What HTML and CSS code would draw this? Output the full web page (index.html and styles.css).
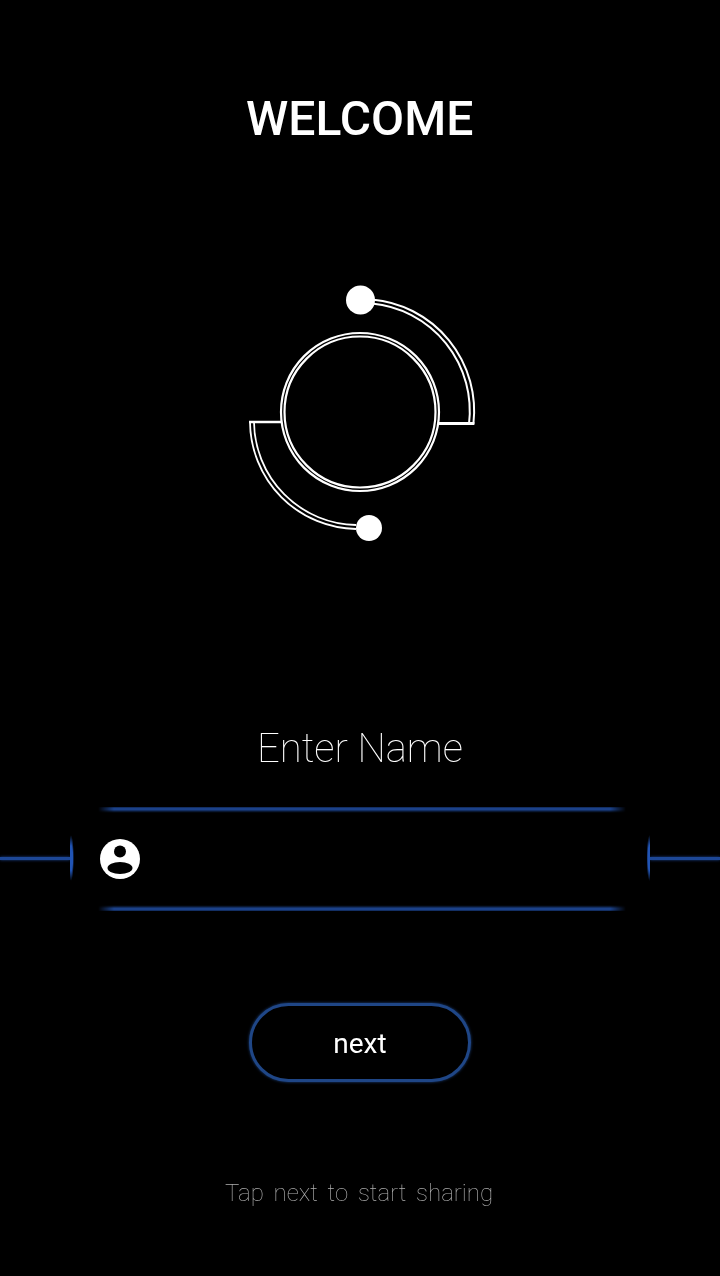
FILE: index.html
```html
<!DOCTYPE html>
<html lang="en">
<head>
<meta charset="utf-8">
<title>Welcome</title>
<link rel="stylesheet" href="styles.css">
</head>
<body>
<main class="screen">
  <h1 class="title">WELCOME</h1>
  <svg class="logo" width="720" height="280" viewBox="0 0 720 280" aria-hidden="true">
    <g transform="translate(0 -270)" fill="none" stroke="#fff">
      <circle cx="360" cy="412" r="79" stroke-width="2.2"/>
      <circle cx="360" cy="412" r="75.5" stroke-width="2.2"/>
      <path d="M372 299.5 A112 112 0 0 1 473.4 424" stroke-width="2"/>
      <path d="M372 303.5 A108 108 0 0 1 469 424" stroke-width="2"/>
      <path d="M438 423.5 H474.4" stroke-width="3"/>
      <path d="M250 422 A108 108 0 0 0 356 529" stroke-width="1.8"/>
      <path d="M254 422 A104 104 0 0 0 356 525" stroke-width="1.8"/>
      <path d="M249 422 H282" stroke-width="2.6"/>
      <circle cx="360.5" cy="300" r="14.5" fill="#fff" stroke="none"/>
      <circle cx="369" cy="528" r="13" fill="#fff" stroke="none"/>
    </g>
  </svg>
  <p class="prompt">Enter Name</p>
  <div class="name-row">
    <span class="wire"></span>
    <div class="field">
      <svg class="avatar" width="40" height="40" viewBox="0 0 40 40" aria-hidden="true">
        <circle cx="20" cy="20" r="20" fill="#fff"/>
        <circle cx="20" cy="12.5" r="6" fill="#000"/>
        <ellipse cx="20" cy="29" rx="12.5" ry="6" fill="#000"/>
      </svg>
    </div>
    <span class="wire"></span>
  </div>
  <button class="next" type="button"><span class="next-label">next</span></button>
  <p class="hint">Tap next to start sharing</p>
</main>
</body>
</html>
```
FILE: styles.css
```css
* { box-sizing: border-box; }
html, body { margin: 0; height: 100%; background: #000; }
.screen {
  width: 720px;
  height: 1276px;
  display: flex;
  flex-direction: column;
  align-items: center;
  font-family: Roboto, "Liberation Sans", sans-serif;
  color: #fff;
  overflow: hidden;
}
.title {
  margin: 91px 0 0;
  font-size: 48px;
  line-height: 56px;
  font-weight: 500;
  will-change: transform;
}
.logo { display: block; margin-top: 123px; }
.prompt {
  margin: 176px 0 0;
  font-size: 40px;
  line-height: 46px;
  font-weight: 100;
  will-change: transform;
}
.name-row {
  margin-top: 35px;
  width: 100%;
  height: 104px;
  display: flex;
  align-items: center;
}
.wire {
  flex: 1;
  height: 3px;
  margin-bottom: 2px;
  background: #1d4796;
  box-shadow: 0 0 3px #1d4796;
}
.field {
  position: relative;
  width: 580px;
  height: 104px;
  display: flex;
  align-items: center;
  padding: 0 0 0 30px;
}
.field::before {
  content: "";
  position: absolute;
  left: 28px;
  right: 24px;
  top: 0;
  bottom: 0;
  border-top: 4px solid #1d4796;
  border-bottom: 4px solid #1d4796;
  filter: blur(.8px);
  -webkit-mask-image: linear-gradient(90deg, transparent, #000 16px, #000 calc(100% - 16px), transparent);
  mask-image: linear-gradient(90deg, transparent, #000 16px, #000 calc(100% - 16px), transparent);
}
.field::after {
  content: "";
  position: absolute;
  left: 0;
  right: 0;
  top: 28px;
  height: 46px;
  background:
    radial-gradient(ellipse 3px 23px at 1px 50%, #2154b4 55%, transparent),
    radial-gradient(ellipse 3px 23px at calc(100% - 0.5px) 50%, #2154b4 55%, transparent);
}
.avatar { display: block; }
.next {
  margin-top: 92px;
  width: 222px;
  height: 79px;
  border: 3px solid #1f4686;
  border-radius: 40px;
  background: #000;
  color: #fff;
  font: 400 28px/1 Roboto, "Liberation Sans", sans-serif;
  box-shadow: 0 0 3px #1f4686;
}
.next-label { display: block; padding-top: 2px; will-change: transform; }
.hint {
  margin: 97px 0 0;
  padding-right: 2px;
  font-size: 24px;
  line-height: 28px;
  font-weight: 100;
  word-spacing: 4px;
  color: #b0b0b0;
  will-change: transform;
}
```
